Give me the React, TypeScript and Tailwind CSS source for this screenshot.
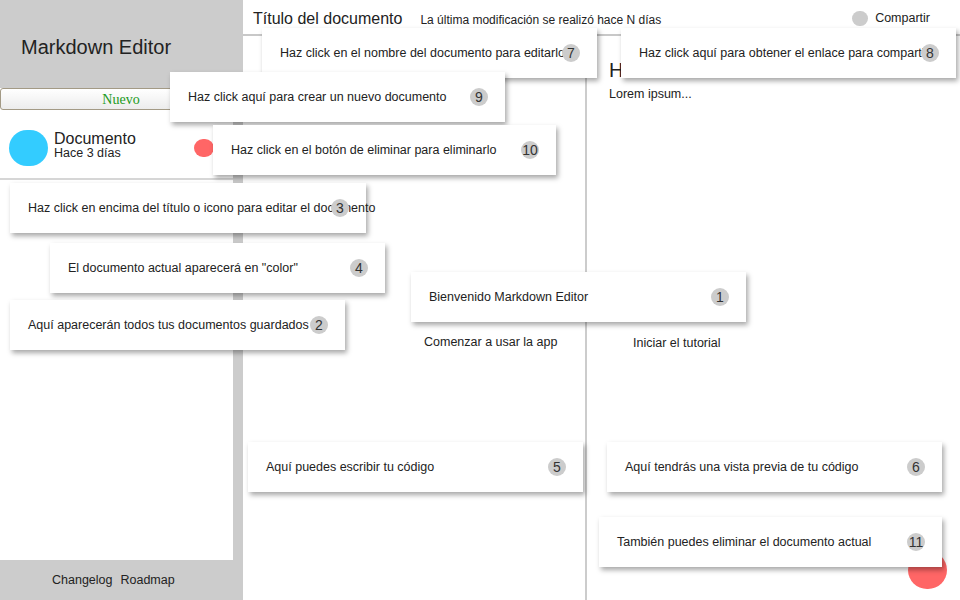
import React from "react";

const sans = { fontFamily: '"Liberation Sans", Arial, sans-serif' };

type Tip = { n: string; text: string; x: number; y: number; w: number };

const tips: Tip[] = [
  { n: "7", text: "Haz click en el nombre del documento para editarlo", x: 262, y: 28, w: 335 },
  { n: "8", text: "Haz click aquí para obtener el enlace para compartir", x: 621, y: 28, w: 335 },
  { n: "9", text: "Haz click aquí para crear un nuevo documento", x: 170, y: 72, w: 335 },
  { n: "10", text: "Haz click en el botón de eliminar para eliminarlo", x: 213, y: 125, w: 343 },
  { n: "3", text: "Haz click en encima del título o icono para editar el documento", x: 10, y: 183, w: 356 },
  { n: "4", text: 'El documento actual aparecerá en "color"', x: 50, y: 243, w: 335 },
  { n: "1", text: "Bienvenido Markdown Editor", x: 411, y: 272, w: 335 },
  { n: "2", text: "Aquí aparecerán todos tus documentos guardados", x: 10, y: 300, w: 335 },
  { n: "5", text: "Aquí puedes escribir tu código", x: 248, y: 442, w: 335 },
  { n: "6", text: "Aquí tendrás una vista previa de tu código", x: 607, y: 442, w: 335 },
  { n: "11", text: "También puedes eliminar el documento actual", x: 599, y: 517, w: 343 },
];

function TipCard({ tip }: { tip: Tip }) {
  return (
    <div
      className="absolute h-[50px] bg-white shadow-[2px_3px_5px_rgba(0,0,0,0.35)] flex items-center pl-[18px] text-[12.5px] text-[#222] whitespace-nowrap"
      style={{ left: tip.x, top: tip.y, width: tip.w }}
    >
      <span>{tip.text}</span>
      <span
        className="absolute right-[17px] top-[16px] w-[18px] h-[18px] rounded-full bg-[#cccccc] flex items-center justify-center text-[14px] text-[#333]"
        style={sans}
      >
        {tip.n}
      </span>
    </div>
  );
}

export default function App() {
  return (
    <div
      className="relative w-[960px] h-[600px] overflow-hidden bg-white flex text-[#222]"
      style={{ fontFamily: '"Liberation Sans", Arial, sans-serif' }}
    >
      {/* Sidebar */}
      <aside className="w-[243px] h-full flex flex-col shrink-0">
        <div className="h-[88px] bg-[#cccccc] flex items-center pl-[21px] pt-[6px] text-[20px] text-[#222]">
          Markdown Editor
        </div>
        <button
          className="h-[22px] w-[242px] border border-[#a39a85] rounded-[3px] bg-gradient-to-b from-white to-[#ececec] text-[#1a9a1a] text-[14px]"
          style={{ fontFamily: '"Liberation Serif", "Times New Roman", serif' }}
        >
          Nuevo
        </button>
        <div className="flex flex-1">
          <div className="w-[233px] flex flex-col">
            <div className="h-[12px]" />
            <div className="h-[58px] flex items-center pl-[9px] pr-[19px] border-b-2 border-[#d6d6d6]">
              <div className="w-[39px] h-[36px] rounded-full bg-[#33ccff] -mt-[4px]" />
              <div className="ml-[6px] -mt-[8px] flex flex-col leading-[15px]">
                <span className="text-[16px]">Documento</span>
                <span className="text-[12.5px]">Hace 3 días</span>
              </div>
              <div className="ml-auto w-[20px] h-[18px] rounded-full bg-[#ff6666] -mt-[4px]" />
            </div>
            <div className="flex-1" />
          </div>
          <div className="flex flex-col w-[10px]">
            <div className="h-[12px] bg-white" />
            <div className="flex-1 bg-[#cccccc]" />
          </div>
        </div>
        <div className="h-[40px] bg-[#cccccc] flex items-center pl-[52px] gap-[8px] text-[12.5px]">
          <span>Changelog</span>
          <span>Roadmap</span>
        </div>
      </aside>

      {/* Main */}
      <main className="flex-1 flex flex-col">
        <header className="h-[36px] border-b-2 border-[#c8c8c8] flex items-center pl-[10px] pr-[30px] pt-[3px]">
          <span className="text-[16px]">Título del documento</span>
          <span className="ml-[18px] text-[12px] mt-[3px]">La última modificación se realizó hace N días</span>
          <div className="ml-auto flex items-center gap-[7px]">
            <div className="w-[16px] h-[15px] rounded-full bg-[#cccccc]" />
            <span className="text-[12.5px]">Compartir</span>
          </div>
        </header>
        <div className="flex flex-1">
          <section className="w-[344px] border-r-2 border-[#cccccc] pl-[181px] pt-[293px]">
            <span className="text-[12.5px] whitespace-nowrap">Comenzar a usar la app</span>
          </section>
          <section className="flex-1 flex flex-col pl-[22px] pt-[22px]">
            <h1 className="text-[20px] leading-[24px]">H</h1>
            <p className="text-[12.5px] mt-[3px]">Lorem ipsum...</p>
            <p className="text-[12.5px] mt-[230px] pl-[24px]">Iniciar el tutorial</p>
          </section>
        </div>
      </main>

      {/* Floating delete button */}
      <div className="absolute left-[908px] top-[551px] w-[39px] h-[38px] rounded-full bg-[#ff6666]" />

      {/* Tutorial tips */}
      {tips.map((t) => (
        <TipCard key={t.n} tip={t} />
      ))}
    </div>
  );
}
